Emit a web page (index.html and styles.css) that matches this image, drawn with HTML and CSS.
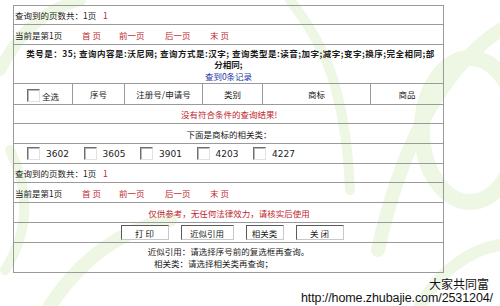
FILE: index.html
```html
<!DOCTYPE html>
<html lang="zh-CN">
<head>
<meta charset="utf-8">
<title>商标查询结果</title>
<link rel="stylesheet" href="styles.css">
</head>
<body>
<svg class="bg" width="500" height="306" viewBox="0 0 500 306" aria-hidden="true">
  <g fill="none" stroke="#edf7e3" stroke-linecap="round">
    <ellipse cx="470" cy="130" rx="48" ry="72" stroke-width="16"/>
    <path d="M378 250 C 400 150, 440 70, 500 30" stroke-width="14"/>
    <path d="M290 0 C 320 40, 345 80, 350 190" stroke-width="10"/>
    <path d="M0 70 C 20 30, 45 10, 80 0" stroke-width="12"/>
    <path d="M10 150 C 30 190, 30 230, 5 270" stroke-width="10"/>
    <path d="M50 306 C 80 260, 120 230, 170 220" stroke-width="14"/>
    <path d="M420 306 C 440 270, 470 250, 500 245" stroke-width="12"/>
  </g>
</svg>

<div class="panel">
  <div class="row r19"><span class="lead">查询到的页数共：1页</span><span class="red">1</span></div>
  <div class="row r20">
    <span class="cur">当前是第1页</span>
    <a class="red nav w37">首 页</a>
    <a class="red nav w46">前一页</a>
    <a class="red nav w45">后一页</a>
    <a class="red nav">末 页</a>
  </div>
  <div class="row info">
    <div class="line1">类号是：35; 查询内容是:沃尼网; 查询方式是:汉字; 查询类型是:读音;加字;减字;变字;换序;完全相同;部</div>
    <div>分相同;</div>
    <a class="blue">查到0条记录</a>
  </div>
  <div class="row head">
    <div class="hc first"><input type="checkbox" class="cb"><span>全选</span></div>
    <div class="hc">序号</div>
    <div class="hc">注册号/申请号</div>
    <div class="hc">类别</div>
    <div class="hc">商标</div>
    <div class="hc">商品</div>
  </div>
  <div class="row r19 center red">没有符合条件的查询结果!</div>
  <div class="row r20 center">下面是商标的相关类：</div>
  <div class="row r20 cats">
    <label class="cat"><input type="checkbox" class="cb"><span>3602</span></label>
    <label class="cat"><input type="checkbox" class="cb"><span>3605</span></label>
    <label class="cat"><input type="checkbox" class="cb"><span>3901</span></label>
    <label class="cat"><input type="checkbox" class="cb"><span>4203</span></label>
    <label class="cat"><input type="checkbox" class="cb"><span>4227</span></label>
  </div>
  <div class="row r19"><span class="lead">查询到的页数共：1页</span><span class="red">1</span></div>
  <div class="row r20">
    <span class="cur">当前是第1页</span>
    <a class="red nav w37">首 页</a>
    <a class="red nav w46">前一页</a>
    <a class="red nav w45">后一页</a>
    <a class="red nav">末 页</a>
  </div>
  <div class="row r20 center red">仅供参考，无任何法律效力，请核实后使用</div>
  <div class="row r20 btns">
    <button class="btn w48">打 印</button>
    <button class="btn w53">近似引用</button>
    <button class="btn w38">相关类</button>
    <button class="btn w48">关 闭</button>
  </div>
  <div class="row notes">
    <div>近似引用：请选择序号前的复选框再查询。</div>
    <div class="n2">相关类：请选择相关类再查询；</div>
  </div>
</div>

<div class="wm">
  <div class="wm1">大家共同富</div>
  <div class="wm2">http://home.zhubajie.com/2531204/</div>
</div>
</body>
</html>
```

FILE: styles.css
```css
html, body {
  margin: 0;
  padding: 0;
  background: #ffffff;
}
body {
  position: relative;
  width: 500px;
  height: 306px;
  overflow: hidden;
  font-family: "Noto Sans CJK SC", "Noto Sans", sans-serif;
  font-size: 8.5px;
  color: #1a1a1a;
}
.bg {
  position: absolute;
  left: 0;
  top: 0;
  z-index: 0;
}
.panel {
  position: relative;
  z-index: 1;
  margin: 5px 0 0 13px;
  width: 431px;
  box-sizing: border-box;
  border: 1px solid #9a9a9a;
}
.row {
  box-sizing: border-box;
  border-bottom: 1px solid #9a9a9a;
  display: flex;
  align-items: center;
  padding-left: 1px;
  white-space: nowrap;
}
.row:last-child { border-bottom: none; }
.r19 { height: 19px; }
.r20 { height: 20px; }
.red { color: #c0262e; }
.blue { color: #1f35a8; text-decoration: none; }
a { text-decoration: none; }
.lead { display: inline-block; width: 88px; }
.cur { display: inline-block; width: 67px; }
.nav { display: inline-block; }
.w37 { width: 37px; }
.w46 { width: 46px; }
.w45 { width: 45px; }
.center { justify-content: center; }

.info {
  height: 39px;
  display: block;
  text-align: center;
  font-weight: bold;
  line-height: 11px;
  padding-top: 3px;
  padding-left: 0;
}
.info .blue {
  display: block;
  font-weight: normal;
  margin-top: 1px;
}
.line1 { white-space: nowrap; margin-left: 4px; letter-spacing: 0.5px; }

.head {
  height: 21px;
  display: grid;
  grid-template-columns: 58px 52px 78px 60px 108px 1fr;
  padding-left: 0;
  align-items: stretch;
}
.hc {
  display: flex;
  align-items: center;
  justify-content: center;
  border-left: 1px solid #9a9a9a;
  box-sizing: border-box;
}
.hc.first { border-left: none; padding-top: 2px; }
.hc.first span { margin-left: 2px; padding-top: 2px; }

.cb {
  -webkit-appearance: none;
  appearance: none;
  margin: 0;
  width: 13px;
  height: 13px;
  box-sizing: border-box;
  background: #ffffff;
  border: 1px solid;
  border-color: #6f6f6f #e2e2e2 #e2e2e2 #6f6f6f;
  box-shadow: inset 1px 1px 0 #b8b8b8;
}

.cats { padding-left: 13px; }
.cat {
  display: inline-flex;
  align-items: center;
  width: 56.5px;
  flex: none;
}
.cat span {
  margin-left: 6px;
  font-family: "DejaVu Sans", sans-serif;
  font-size: 9px;
  color: #222;
}

.btns {
  justify-content: center;
  gap: 12px;
  padding-left: 7px;
}
.btn {
  height: 15px;
  padding: 0;
  margin: 0;
  box-sizing: border-box;
  background: #ffffff;
  border: 1px solid;
  border-color: #5a5a5a #c8c8c8 #c8c8c8 #5a5a5a;
  font-family: "Noto Sans CJK SC", sans-serif;
  font-size: 8.5px;
  line-height: 12px;
  color: #1a1a1a;
  text-align: center;
}
.w48 { width: 48px; }
.w53 { width: 53px; }
.w38 { width: 38px; }

.notes {
  height: 29px;
  display: block;
  text-align: center;
  line-height: 12px;
  padding-top: 2px;
  padding-left: 0;
}
.n2 { margin-right: 30px; }

.wm {
  position: absolute;
  right: 7px;
  bottom: 1px;
  z-index: 2;
  text-align: right;
  color: #111;
  text-shadow: 0 0 2px #fff, 0 0 2px #fff, 0 0 1px #fff;
}
.wm1 {
  font-family: "Noto Sans CJK SC", sans-serif;
  font-size: 12px;
  line-height: 14px;
  margin-right: 4px;
}
.wm2 {
  font-family: "Liberation Sans", Arial, sans-serif;
  font-size: 12.5px;
  line-height: 14px;
  letter-spacing: -0.1px;
}
```
